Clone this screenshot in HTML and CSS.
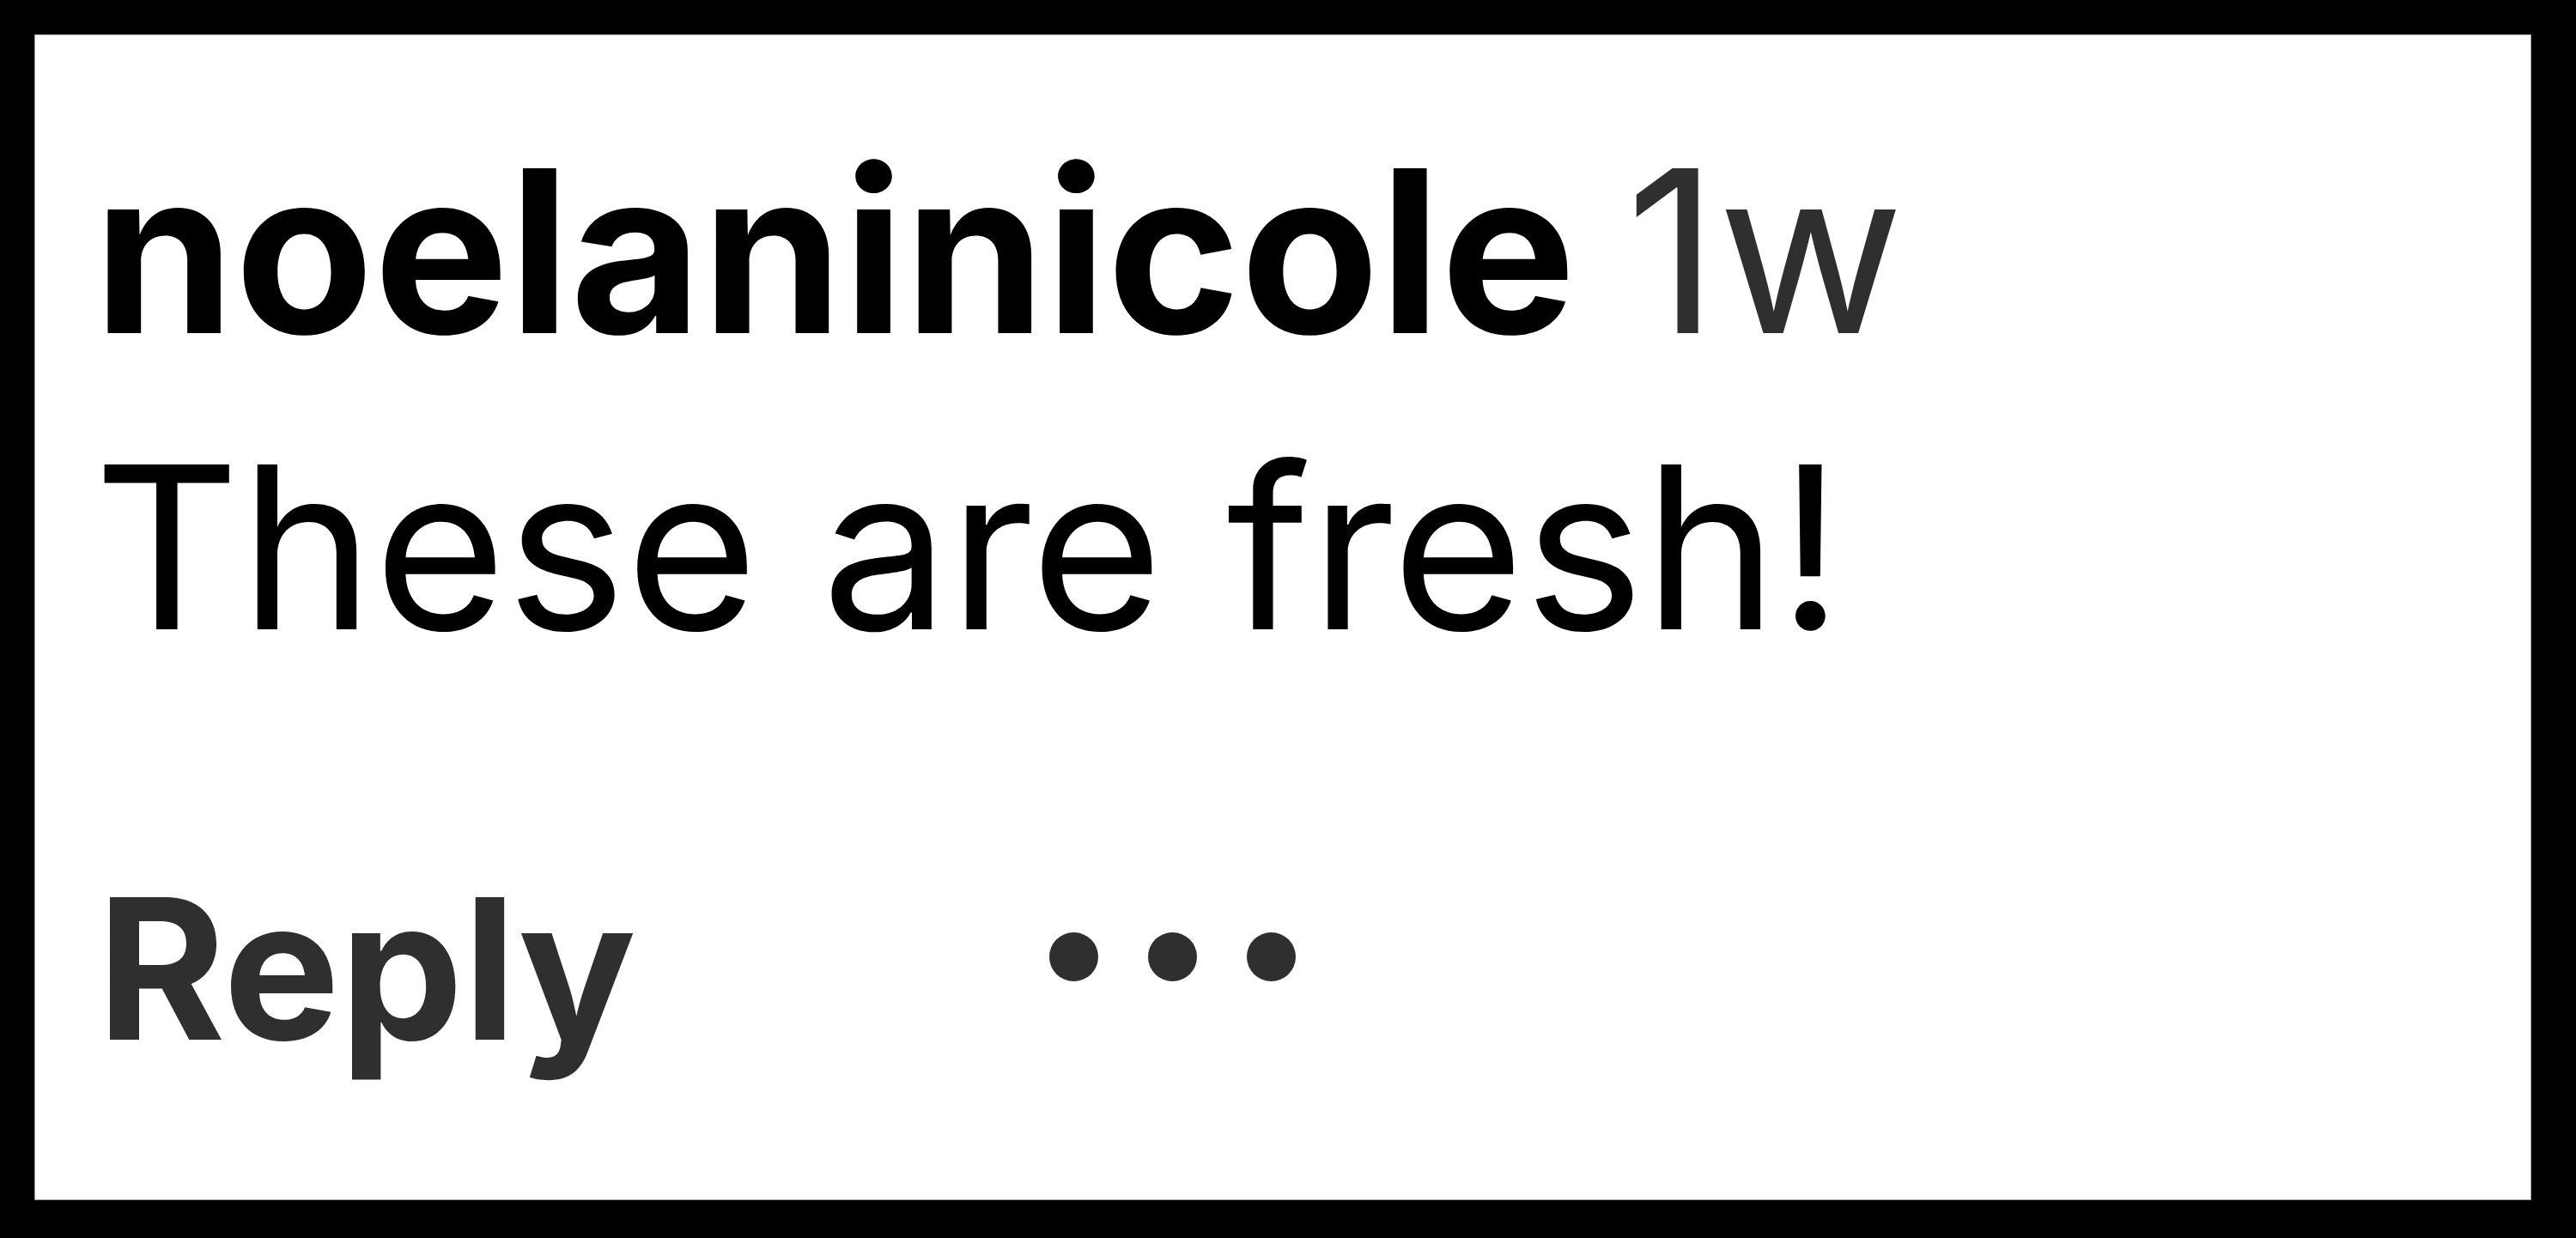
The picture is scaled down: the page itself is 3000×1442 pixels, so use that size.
FILE: index.html
```html
<!DOCTYPE html>
<html lang="en">
<head>
  <meta charset="UTF-8">
  <title>Comment</title>
  <link rel="stylesheet" href="styles.css">
</head>
<body>
  <div class="card">
    <div class="comment">
      <div class="comment-head">
        <span class="user">noelaninicole</span>
        <span class="age">1w</span>
      </div>
      <div class="comment-text">These are fresh!</div>
    </div>
    <div class="actions">
      <span class="reply">Reply</span>
      <span class="more">
        <i></i><i></i><i></i>
      </span>
    </div>
  </div>
</body>
</html>
```

FILE: styles.css
```css
html, body {
  height: 100%;
}
body {
  margin: 0;
  background: #000;
  padding: 40px 52px 44px 40px;
  box-sizing: border-box;
  font-family: Inter, Roboto, "Liberation Sans", sans-serif;
}
.card {
  height: 100%;
  box-sizing: border-box;
  background: #fff;
  border: 1px solid #999;
  padding: 79px 60px 0 68px;
}
.comment {
  font-size: 264px;
  line-height: 345px;
  color: #000;
}
.user {
  font-weight: 700;
}
.age {
  color: #2f2f2f;
  margin-left: -16px;
}
.actions {
  display: flex;
  align-items: center;
  margin-top: 168px;
  height: 300px;
}
.reply {
  font-size: 228px;
  line-height: 300px;
  font-weight: 700;
  color: #2f2f2f;
  margin-left: 4px;
}
.more {
  display: flex;
  gap: 58px;
  margin-left: 481px;
  margin-bottom: 28px;
}
.more i {
  width: 57px;
  height: 57px;
  border-radius: 50%;
  background: #2f2f2f;
}
```
